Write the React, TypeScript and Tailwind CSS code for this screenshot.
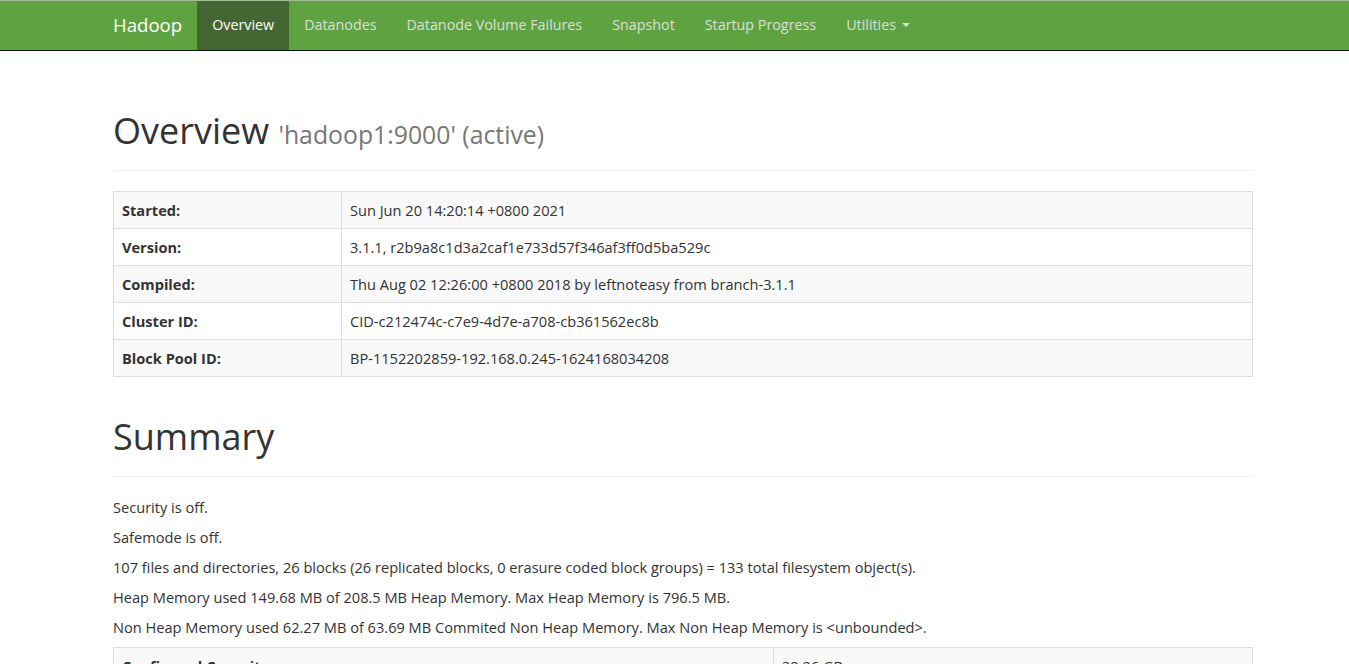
import React from "react";

const infoRows: [string, string][] = [
  ["Started:", "Sun Jun 20 14:20:14 +0800 2021"],
  ["Version:", "3.1.1, r2b9a8c1d3a2caf1e733d57f346af3ff0d5ba529c"],
  ["Compiled:", "Thu Aug 02 12:26:00 +0800 2018 by leftnoteasy from branch-3.1.1"],
  ["Cluster ID:", "CID-c212474c-c7e9-4d7e-a708-cb361562ec8b"],
  ["Block Pool ID:", "BP-1152202859-192.168.0.245-1624168034208"],
];

const navItems = [
  "Overview",
  "Datanodes",
  "Datanode Volume Failures",
  "Snapshot",
  "Startup Progress",
];

export default function App() {
  return (
    <div
      className="min-h-[664px] bg-white text-[14.6px] leading-[20px] text-[#333333]"
      style={{ fontFamily: '"Open Sans", "Noto Sans", sans-serif' }}
    >
      <nav className="h-[51px] border-t border-t-[#9fbf92] border-b border-b-[#111111] bg-[#5fa341]">
        <div className="ml-[98px] flex h-[49px] items-stretch text-[14.3px]">
          <div className="flex items-center px-[15px] pb-[1px] text-[18.6px] leading-[20px] text-white">
            Hadoop
          </div>
          {navItems.map((item, i) => (
            <div
              key={item}
              className={
                i === 0
                  ? "flex items-center bg-[#446633] px-[15px] pb-[1px] text-white"
                  : "flex items-center px-[15px] pb-[1px] text-[#dddddd]"
              }
            >
              {item}
            </div>
          ))}
          <div className="flex items-center px-[15px] pb-[1px] text-[#dddddd]">
            Utilities
            <span className="ml-[6px] inline-block h-0 w-0 border-x-[4px] border-t-[4px] border-x-transparent border-t-[#dddddd]" />
          </div>
        </div>
      </nav>

      <div className="ml-[113px] w-[1140px]">
        <div className="mt-[60px] mb-[20px] border-b border-[#eeeeee] pb-[9px]">
          <h1 className="mb-[10px] h-[40px] text-[36px] leading-[40px] font-normal">
            Overview{" "}
            <span className="text-[24.8px] leading-none text-[#777777]">'hadoop1:9000' (active)</span>
          </h1>
        </div>

        <table className="mb-[20px] w-full border-collapse border border-[#dddddd]">
          <tbody>
            {infoRows.map(([k, v], i) => (
              <tr key={k} className={i % 2 === 0 ? "bg-[#f9f9f9]" : "bg-white"}>
                <th className="h-[37px] w-[228px] border border-[#dddddd] px-[8px] py-0 text-left font-bold">
                  {k}
                </th>
                <td className="h-[37px] border border-[#dddddd] px-[8px] py-0">{v}</td>
              </tr>
            ))}
          </tbody>
        </table>

        <div className="mt-[40px] mb-[20px] border-b border-[#eeeeee] pb-[9px]">
          <h1 className="mb-[10px] h-[40px] text-[36px] leading-[40px] font-normal">Summary</h1>
        </div>

        <p className="mb-[10px]">Security is off.</p>
        <p className="mb-[10px]">Safemode is off.</p>
        <p className="mb-[10px]">
          107 files and directories, 26 blocks (26 replicated blocks, 0 erasure coded block groups) = 133 total filesystem object(s).
        </p>
        <p className="mb-[10px]">
          Heap Memory used 149.68 MB of 208.5 MB Heap Memory. Max Heap Memory is 796.5 MB.
        </p>
        <p className="mb-[10px]">
          Non Heap Memory used 62.27 MB of 63.69 MB Commited Non Heap Memory. Max Non Heap Memory is &lt;unbounded&gt;.
        </p>

        <table className="mb-[20px] w-full border-collapse border border-[#dddddd]">
          <tbody>
            <tr className="bg-[#f9f9f9]">
              <th className="h-[37px] w-[660px] border border-[#dddddd] px-[8px] py-0 text-left font-bold">
                Configured Capacity:
              </th>
              <td className="h-[37px] border border-[#dddddd] px-[8px] py-0">38.26 GB</td>
            </tr>
            <tr className="bg-white">
              <th className="h-[37px] border border-[#dddddd] px-[8px] py-0 text-left font-bold">
                Configured Remote Capacity:
              </th>
              <td className="h-[37px] border border-[#dddddd] px-[8px] py-0">0 B</td>
            </tr>
          </tbody>
        </table>
      </div>
    </div>
  );
}
